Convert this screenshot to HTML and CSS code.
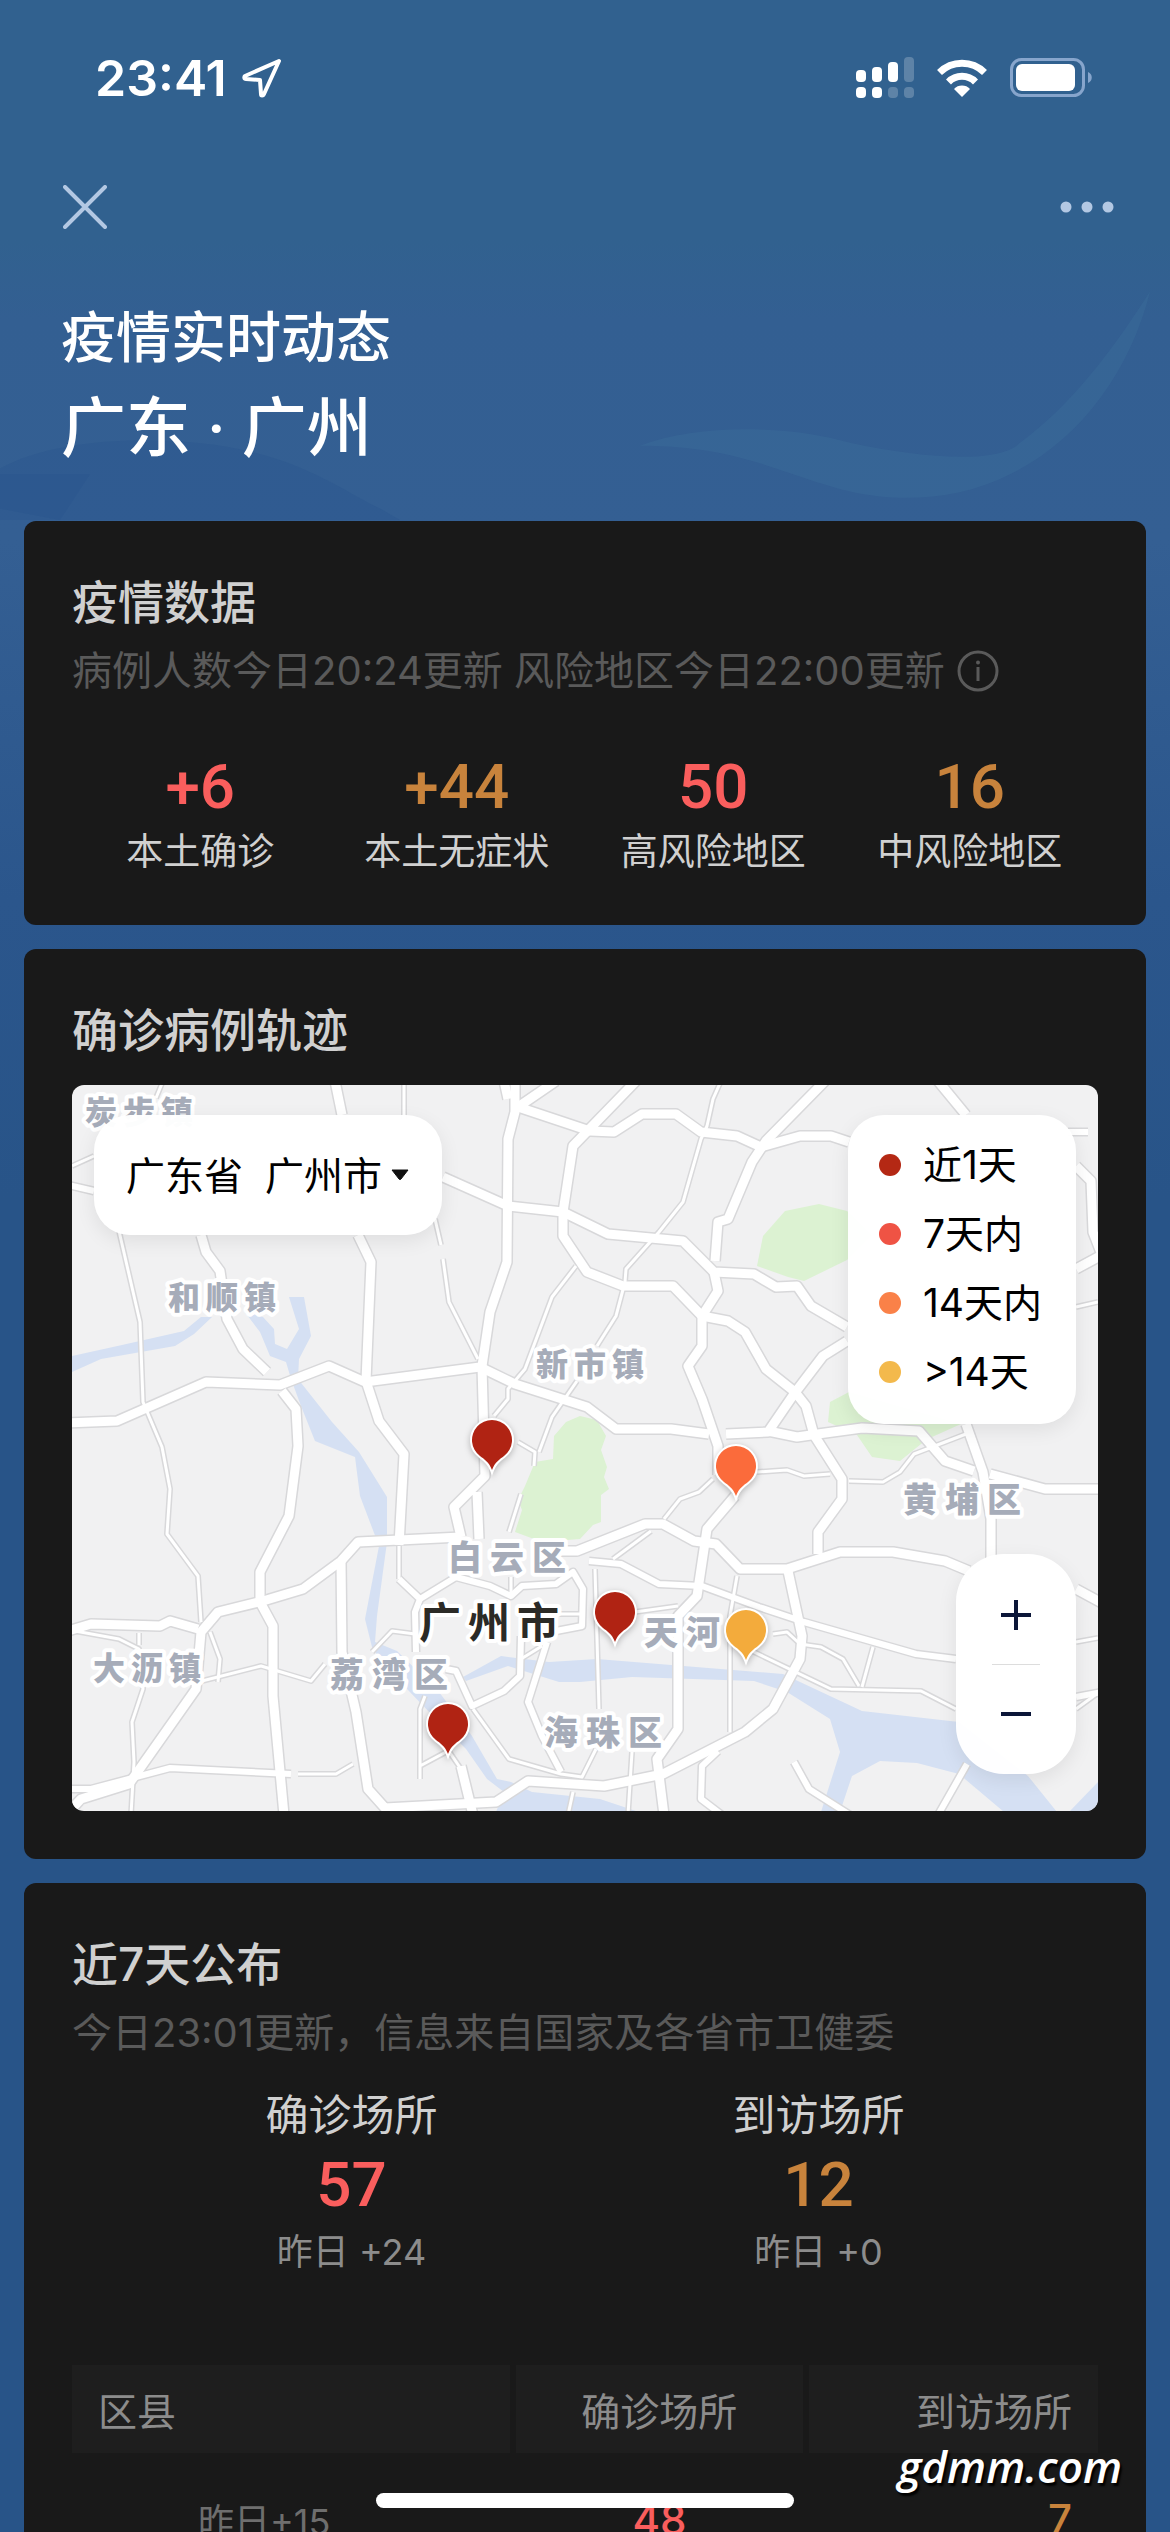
FILE: index.html
```html
<!DOCTYPE html>
<html lang="zh-CN">
<head>
    <meta charset="UTF-8">
    <meta name="viewport" content="width=device-width, initial-scale=1.0">
    <title>疫情实时动态</title>
    <link rel="stylesheet" href="styles.css">
</head>
<body>
<div class="page">
    <svg class="hero-art" viewBox="0 0 1170 420" preserveAspectRatio="none" aria-hidden="true">
        <path class="wave-light" d="M640 290C700 250 790 255 850 285C930 315 1000 320 1020 285C1070 220 1110 130 1150 20C1130 160 1080 280 1010 340C960 385 900 390 850 370C780 340 740 290 640 290Z"/>
        <path class="wave-dark" d="M0 330C60 270 180 270 250 300C310 325 340 365 380 400L400 420L60 420L0 400Z"/>
        <path class="wave-dark" d="M0 340L90 340L60 420L0 420Z"/>
    </svg>

    <div class="status-bar">
        <div class="status-left">
            <span class="time">23:41</span>
            <svg width="42" height="42" viewBox="0 0 42 42" aria-hidden="true">
                <path d="M38 4L4 19C3 20 3 22 5 22L19 23L20 37C20 39 22 39 23 37Z" fill="none" stroke="#fff" stroke-width="4" stroke-linejoin="round"/>
            </svg>
        </div>
        <div class="status-right">
            <svg width="58" height="42" viewBox="0 0 58 42" fill="#fff" aria-hidden="true">
                <rect x="0" y="13" width="10" height="12" rx="4"/>
                <rect x="16" y="10" width="10" height="15" rx="4"/>
                <rect x="32" y="5" width="10" height="20" rx="4"/>
                <rect x="48" y="0" width="10" height="25" rx="4" opacity=".22"/>
                <rect x="0" y="30" width="10" height="11" rx="4"/>
                <rect x="16" y="30" width="10" height="11" rx="4"/>
                <rect x="32" y="30" width="10" height="11" rx="4" opacity=".22"/>
                <rect x="48" y="30" width="10" height="11" rx="4" opacity=".22"/>
            </svg>
            <svg width="52" height="38" viewBox="0 0 52 38" aria-hidden="true">
                <path d="M3.500 13.500A32 32 0 0 1 48.500 13.500" fill="none" stroke="#fff" stroke-width="7"/>
                <path d="M12.500 23A19 19 0 0 1 39.500 23" fill="none" stroke="#fff" stroke-width="7"/>
                <path d="M18 30A11 11 0 0 1 34 30L26 38Z" fill="#fff"/>
            </svg>
            <svg width="84" height="40" viewBox="0 0 84 40" aria-hidden="true">
                <rect x="1.500" y="1.500" width="72" height="36" rx="10" fill="none" stroke="#87a5cc" stroke-width="3"/>
                <rect x="6" y="6" width="59" height="27" rx="6" fill="#fff"/>
                <path d="M78 14C83 16 83 23 78 25Z" fill="#87a5cc"/>
            </svg>
        </div>
    </div>

    <div class="nav-bar">
        <button class="icon-btn" aria-label="关闭">
            <svg width="44" height="44" viewBox="0 0 44 44"><path d="M2 2L42 42M42 2L2 42" stroke="#b3c8e3" stroke-width="4" stroke-linecap="round"/></svg>
        </button>
        <button class="icon-btn" aria-label="更多">
            <svg width="54" height="12" viewBox="0 0 54 12" fill="#b3c8e3"><circle cx="6" cy="6" r="5.500"/><circle cx="27" cy="6" r="5.500"/><circle cx="48" cy="6" r="5.500"/></svg>
        </button>
    </div>

    <header class="hero">
        <h1>疫情实时动态</h1>
        <p class="place">广东 · 广州</p>
    </header>

    <main class="cards">
        <section class="card">
            <h2>疫情数据</h2>
            <p class="note">
                <span>病例人数今日20:24更新 风险地区今日22:00更新</span>
                <button class="icon-btn" aria-label="说明">
                    <svg width="42" height="42" viewBox="0 0 42 42"><circle cx="21" cy="21" r="19" fill="none" stroke="#5a5a5a" stroke-width="3"/><circle cx="21" cy="12.500" r="2" fill="#5a5a5a"/><path d="M21 17V31" stroke="#5a5a5a" stroke-width="3"/></svg>
                </button>
            </p>
            <div class="stats">
                <div class="stat"><strong class="num red">+6</strong><span>本土确诊</span></div>
                <div class="stat"><strong class="num amber">+44</strong><span>本土无症状</span></div>
                <div class="stat"><strong class="num red">50</strong><span>高风险地区</span></div>
                <div class="stat"><strong class="num amber">16</strong><span>中风险地区</span></div>
            </div>
        </section>

        <section class="card">
            <h2>确诊病例轨迹</h2>
            <div class="map">
                <svg class="map-canvas" viewBox="0 0 1026 726" preserveAspectRatio="xMidYMid slice">
                    <defs>
                        <g id="minor">
                            <path d="M91 -4L84 13M0 81L22 71M47 146L68 237L71 317L90 362L98 404L95 449L126 491L129 537"/>
                            <path d="M332 -4V34M363 134L369 160M371 174L377 217L406 274"/>
                            <path d="M504 181L480 212L453 284L436 304V314L422 331M505 296L480 332L467 367M446 357L463 367L462 381M449 409L437 447"/>
                            <path d="M649 -4L641 14L635 41L629 54L611 117L587 147L554 184L553 197L544 231L525 261"/>
                            <path d="M1004 222L1026 217M685 387L715 385L732 391L758 389M777 396L811 397L828 387L842 369L894 349"/>
                            <path d="M641 394L627 407L608 414L592 434M579 446L541 474M523 484L527 624M665 491L658 531V647"/>
                            <path d="M701 549L715 547L728 559L749 562L771 574L787 601M801 562L790 602M563 527L606 521"/>
                            <path d="M680 566L759 604L849 606L884 624M1004 557L1026 553M1004 624L1026 608"/>
                            <path d="M3 546L47 554L67 564L71 604L60 637L62 677L59 730M138 547L148 574L146 597"/>
                            <path d="M126 597L189 581L239 596L253 579M300 567L320 546L343 549M449 574L470 561"/>
                            <path d="M353 611L348 624V694M348 681L374 667M401 624L437 674L489 689L510 692L524 664"/>
                            <path d="M484 529H512M67 548V560M501 707L496 730M560 667L556 730M439 492V510M327 461V494"/>
                            <path d="M226 689H264L281 679M374 662L389 684"/>
                        </g>
                        <g id="mid">
                            <path d="M-4 100L22 106M-4 704H19L98 683L219 689M327 494L348 514L343 527L344 567"/>
                            <path d="M348 514L384 492L418 501L439 511L450 501L484 499L501 487L511 504L510 541L484 546"/>
                            <path d="M449 551L448 591L432 606L400 621L384 586L374 584M475 557L456 617L470 651L489 687"/>
                            <path d="M517 476L549 479L587 499L630 501L687 522L732 537L844 569L884 574"/>
                            <path d="M646 666L630 681L629 714L650 730M722 677L737 704L778 730M895 679L866 730M1004 612L1030 607M996 47H1016"/>
                        </g>
                        <g id="major">
                            <path d="M-4 338L45 336L134 297L208 300L257 281L293 297L408 282L443 299L515 322L544 344H599L637 349"/>
                            <path d="M129 150L134 167L148 186L155 234L171 264L195 287M210 306L224 324L226 361L217 431L188 487V517L201 541V611L212 730"/>
                            <path d="M263 -4L270 30M286 150L299 177L294 296L307 336L332 369L327 460"/>
                            <path d="M443 -4V27L436 54L435 177L418 227L410 281L413 391L382 422L389 452M405 407L407 454"/>
                            <path d="M432 -4L436 14M371 92L436 121L491 127L536 149L611 156L642 187L682 189L704 202L725 201L739 221L775 242"/>
                            <path d="M484 -4L446 22L518 46L542 47L570 29H604L629 47L665 51L689 62L728 51H759L777 57"/>
                            <path d="M564 -4L501 61L491 127V151L515 187L551 201H601L630 231L656 236L673 247L694 284L723 307L734 321L742 350L770 394V414L746 447V469"/>
                            <path d="M753 -4L694 56L680 77L656 134L646 137L643 176M642 187L646 206L630 231V261L616 281L630 314L646 361V390"/>
                            <path d="M654 349L696 347L722 309L751 271L775 256M696 346L725 352L746 349L790 343L847 346L873 376L902 386"/>
                            <path d="M866 -4L894 30M1004 81L1019 96L1021 147L1030 170M1004 184L1030 170"/>
                            <path d="M894 339L911 387L919 434V474M918 389L973 404H1030"/>
                            <path d="M-4 546L19 539L88 541L98 536L126 544"/>
                            <path d="M-4 728L9 714L57 699L124 604L129 547L146 527L191 516L231 504L269 476L286 457L389 452M484 466H505L573 439H591L622 456L644 459L668 484H715L768 467H821L873 476L897 486M1004 504L1030 518"/>
                            <path d="M269 476L270 567L284 627L296 704L313 723L424 717L456 696L532 701L591 689L673 647L701 624L728 574L730 551L716 486"/>
                            <path d="M663 411L635 444L625 511L606 531V644L585 674L592 730M389 681L401 730"/>
                        </g>
                        <path id="pin" d="M0 50C-3 42 -8 39 -12 36A20 20 0 1 1 12 36C8 39 3 42 0 50Z"/>
                    </defs>

                    <rect width="1026" height="726" fill="#f1f1f2"/>
                    <g class="water">
                        <path d="M0 271L50 260L112 246L129 232H140L122 249L103 261L29 274L0 287Z"/>
                        <path d="M172 226L191 232L202 244L203 259L215 264L227 244L217 212H232L239 251L227 274L226 294L260 337L287 367L315 412V457L305 531L303 557L325 566L367 607L400 651L425 694L439 697L460 707L528 714L567 727H424L432 707L415 694L394 664L360 630L312 580L300 562L293 534L307 461L288 411L283 372L243 356L229 321L219 294L214 277L198 271L188 247Z"/>
                        <path d="M391 592L429 571L477 577L525 574L711 589L790 626L887 637L956 691L985 727H932L887 689L845 678L808 676L780 691L768 727H749L768 667L758 634L715 607L682 596L560 592L508 597H487L436 581L394 596Z"/>
                        <path d="M1026 697L997 727H1026Z"/>
                    </g>
                    <g class="green">
                        <path d="M685 181L691 151L713 126L747 119L775 126L800 150L775 175L732 196L716 192Z"/>
                        <path d="M756 337L758 317L777 307L889 339L860 352L849 359L828 376L800 372L785 350Z"/>
                        <path d="M482 351L494 337L508 331L525 335L534 351L529 365L535 382L532 392L537 404L529 410V437L521 440L508 454L470 457L443 447L450 425L446 415L453 401L463 377L481 374Z"/>
                    </g>

                    <use href="#minor" class="road casing-s"/>
                    <use href="#mid" class="road casing-m"/>
                    <use href="#major" class="road casing-l"/>
                    <use href="#minor" class="road fill-s"/>
                    <use href="#mid" class="road fill-m"/>
                    <use href="#major" class="road fill-l"/>

                    <g class="town">
                        <text x="13" y="39">炭步镇</text>
                        <text x="96" y="224">和顺镇</text>
                        <text x="464" y="291">新市镇</text>
                        <text x="21" y="595">大沥镇</text>
                    </g>
                    <g class="district">
                        <text x="831" y="427">黄埔区</text>
                        <text x="376" y="485">白云区</text>
                        <text x="258" y="602">荔湾区</text>
                        <text x="572" y="560">天河</text>
                        <text x="472" y="660">海珠区</text>
                    </g>
                    <text class="city" x="347" y="553">广州市</text>

                    <g class="pins">
                        <use href="#pin" x="420" y="335" fill="#b02313"/>
                        <use href="#pin" x="664" y="361" fill="#fb6b3b"/>
                        <use href="#pin" x="543" y="507" fill="#b02313"/>
                        <use href="#pin" x="674" y="525" fill="#f3ab3c"/>
                        <use href="#pin" x="376" y="619" fill="#b02313"/>
                    </g>
                </svg>

                <div class="region">
                    <select aria-label="选择地区">
                        <option>广东省&nbsp;&nbsp;广州市</option>
                    </select>
                    <svg class="caret" width="18" height="12" viewBox="0 0 18 12" aria-hidden="true"><path d="M1 1H17L10 10Q9 11 8 10Z" fill="#111" stroke="#111" stroke-linejoin="round"/></svg>
                </div>

                <ul class="legend">
                    <li class="d1">近1天</li>
                    <li class="d7">7天内</li>
                    <li class="d14">14天内</li>
                    <li class="dmore">&gt;14天</li>
                </ul>

                <div class="zoom">
                    <button aria-label="放大"><svg width="32" height="32" viewBox="0 0 32 32"><path d="M1 16H31M16 1V31" stroke="#0b1638" stroke-width="4"/></svg></button>
                    <button aria-label="缩小"><svg width="32" height="32" viewBox="0 0 32 32"><path d="M1 16H31" stroke="#0b1638" stroke-width="4"/></svg></button>
                </div>
            </div>
        </section>

        <section class="card">
            <h2>近7天公布</h2>
            <p class="note">今日23:01更新，信息来自国家及各省市卫健委</p>
            <div class="totals">
                <div class="total">
                    <h3>确诊场所</h3>
                    <strong class="num red">57</strong>
                    <span>昨日 +24</span>
                </div>
                <div class="total">
                    <h3>到访场所</h3>
                    <strong class="num amber">12</strong>
                    <span>昨日 +0</span>
                </div>
            </div>
            <table>
                <thead>
                    <tr><th>区县</th><th>确诊场所</th><th>到访场所</th></tr>
                </thead>
                <tbody>
                    <tr><td>昨日+15</td><td class="red">48</td><td class="amber">7</td></tr>
                </tbody>
            </table>
        </section>
    </main>

    <span class="watermark">gdmm.com</span>
    <div class="home-bar"></div>
</div>
</body>
</html>
```
FILE: styles.css
```css
* {
    box-sizing: border-box;
}
body {
    margin: 0;
    font-family: Inter, "Noto Sans CJK SC", sans-serif;
    color: #d0d0d0;
    background: #285488;
}
h1, h2, h3, p, ul {
    margin: 0;
    padding: 0;
}
button {
    border: 0;
    padding: 0;
    background: none;
    cursor: pointer;
}
.icon-btn {
    display: flex;
}
.page {
    position: relative;
    height: 100vh;
    overflow: hidden;
    background: linear-gradient(#31618f 0, #31618f 240px, #335f92 320px, #345f93 540px, #2b568c 900px, #285488 1200px);
}

/* faint shapes behind the title */
.hero-art {
    position: absolute;
    top: 280px;
    left: 0;
    width: 100%;
    height: 240px;
}
.wave-light {
    fill: #3d6d9a;
    opacity: 0.4;
}
.wave-dark {
    fill: #25508a;
    opacity: 0.25;
}

.status-bar {
    position: relative;
    display: flex;
    justify-content: space-between;
    align-items: center;
    height: 156px;
    padding: 0 76px 0 95px;
}
.status-left {
    display: flex;
    align-items: center;
    gap: 14px;
}
.time {
    font-size: 50px;
    font-weight: 600;
    color: #fff;
}
.status-right {
    display: flex;
    align-items: center;
    gap: 22px;
}
.nav-bar {
    position: relative;
    display: flex;
    justify-content: space-between;
    align-items: center;
    height: 102px;
    padding: 0 56px 0 63px;
}
.hero {
    position: relative;
    padding: 43px 61px 44px;
    color: #fff;
}
.hero h1 {
    font-size: 55px;
    line-height: 72px;
    font-weight: 500;
}
.hero .place {
    margin-top: 8px;
    font-family: Roboto, "Noto Sans CJK SC", sans-serif;
    font-size: 65px;
    line-height: 96px;
    font-weight: 500;
}

.cards {
    position: relative;
    display: flex;
    flex-direction: column;
    gap: 24px;
    padding: 0 24px;
}
.card {
    padding: 48px;
    border-radius: 12px;
    background: #191919;
}
.card h2 {
    font-size: 46px;
    line-height: 66px;
    font-weight: 500;
}
.note {
    display: flex;
    align-items: center;
    gap: 12px;
    margin-top: 8px;
    font-size: 40px;
    line-height: 56px;
    color: #5a5a5a;
}
.num {
    font-family: Roboto, sans-serif;
    font-size: 62px;
    line-height: 72px;
    font-weight: 500;
}
.red {
    color: #fa5e5d;
}
.amber {
    color: #c8833c;
}

.stats {
    display: grid;
    grid-template-columns: repeat(4, 1fr);
    margin-top: 52px;
}
.stat {
    display: flex;
    flex-direction: column;
    align-items: center;
    gap: 4px;
    font-size: 37px;
    line-height: 50px;
}

/* map */
.map {
    position: relative;
    margin-top: 22px;
    border-radius: 12px;
    overflow: hidden;
}
.map-canvas {
    display: block;
    width: 100%;
}
.water {
    fill: #d5e0f3;
}
.green {
    fill: #dcf2d2;
}
.road {
    fill: none;
    stroke-linejoin: round;
}
.casing-s { stroke: #d8d8da; stroke-width: 6; }
.casing-m { stroke: #d8d8da; stroke-width: 9; }
.casing-l { stroke: #d8d8da; stroke-width: 12; }
.fill-s { stroke: #fff; stroke-width: 3; }
.fill-m { stroke: #fff; stroke-width: 6; }
.fill-l { stroke: #fff; stroke-width: 9; }
.map-canvas text {
    font-weight: 900;
    fill: #a6acb9;
    stroke: #fff;
    stroke-width: 8px;
    stroke-linejoin: round;
    paint-order: stroke;
}
.town text {
    font-size: 32px;
    letter-spacing: 6px;
}
.district text {
    font-size: 34px;
    letter-spacing: 8px;
}
.map-canvas .city {
    font-size: 42px;
    letter-spacing: 7px;
    fill: #2b2a26;
    font-weight: 700;
}
.pins use {
    stroke: #fff;
    stroke-width: 4px;
    paint-order: stroke;
    filter: drop-shadow(0 2px 3px rgba(0, 0, 0, 0.25));
}
.region, .legend, .zoom {
    position: absolute;
    background: rgba(255, 255, 255, 0.97);
    box-shadow: 0 6px 20px rgba(0, 0, 0, 0.08);
}
.region {
    top: 30px;
    left: 22px;
    border-radius: 36px;
}
.region select {
    appearance: none;
    height: 120px;
    padding: 0 60px 0 32px;
    border: 0;
    background: none;
    font: inherit;
    font-size: 39px;
    color: #000;
}
.caret {
    position: absolute;
    top: 54px;
    right: 33px;
    pointer-events: none;
}
.legend {
    top: 30px;
    right: 22px;
    padding: 15px 34px 18px 31px;
    border-radius: 36px;
    list-style: none;
    font-size: 39px;
    line-height: 69px;
    color: #000;
}
.legend li {
    display: flex;
    align-items: center;
    gap: 22px;
}
.legend li::before {
    content: "";
    width: 22px;
    height: 22px;
    border-radius: 50%;
    background: currentColor;
}
.legend .d1::before { background: #b42814; }
.legend .d7::before { background: #ef5344; }
.legend .d14::before { background: #fa8148; }
.legend .dmore::before { background: #f3b94c; }
.zoom {
    right: 22px;
    bottom: 37px;
    display: flex;
    flex-direction: column;
    width: 120px;
    padding: 12px 36px;
    border-radius: 48px;
}
.zoom button {
    display: flex;
    justify-content: center;
    align-items: center;
    height: 98px;
}
.zoom button + button {
    border-top: 1px solid #ddd;
}

/* last 7 days */
.totals {
    display: grid;
    grid-template-columns: 1fr 1fr;
    margin-top: 26px;
    padding: 0 46px;
}
.total {
    display: flex;
    flex-direction: column;
    align-items: center;
    gap: 6px;
    font-size: 36px;
    line-height: 50px;
    color: #8c8c8c;
}
.total h3 {
    font-size: 43px;
    line-height: 56px;
    font-weight: 400;
    color: #d0d0d0;
}
table {
    width: 100%;
    margin-top: 88px;
    table-layout: fixed;
    border-collapse: collapse;
    font-size: 39px;
}
th {
    height: 88px;
    padding: 0 26px;
    background: #1e1e1e;
    border-right: 6px solid #191919;
    font-weight: 400;
    color: #8c8c8c;
}
th:first-child, td:first-child {
    width: 43%;
    text-align: left;
}
th:last-child, td:last-child {
    border-right: 0;
    text-align: right;
}
td {
    height: 132px;
    padding: 0 26px;
    font-size: 42px;
    font-weight: 500;
    text-align: center;
}
td:first-child {
    padding-left: 126px;
    font-size: 36px;
    font-weight: 400;
    color: #6e6e6e;
}

.watermark {
    position: absolute;
    right: 48px;
    bottom: 36px;
    font: italic 600 44px/60px "Open Sans", sans-serif;
    color: #fff;
    text-shadow: 2px 3px 2px #000;
}
.home-bar {
    position: absolute;
    left: 50%;
    bottom: 24px;
    width: 418px;
    height: 15px;
    margin-left: -209px;
    border-radius: 8px;
    background: #fff;
}
```
